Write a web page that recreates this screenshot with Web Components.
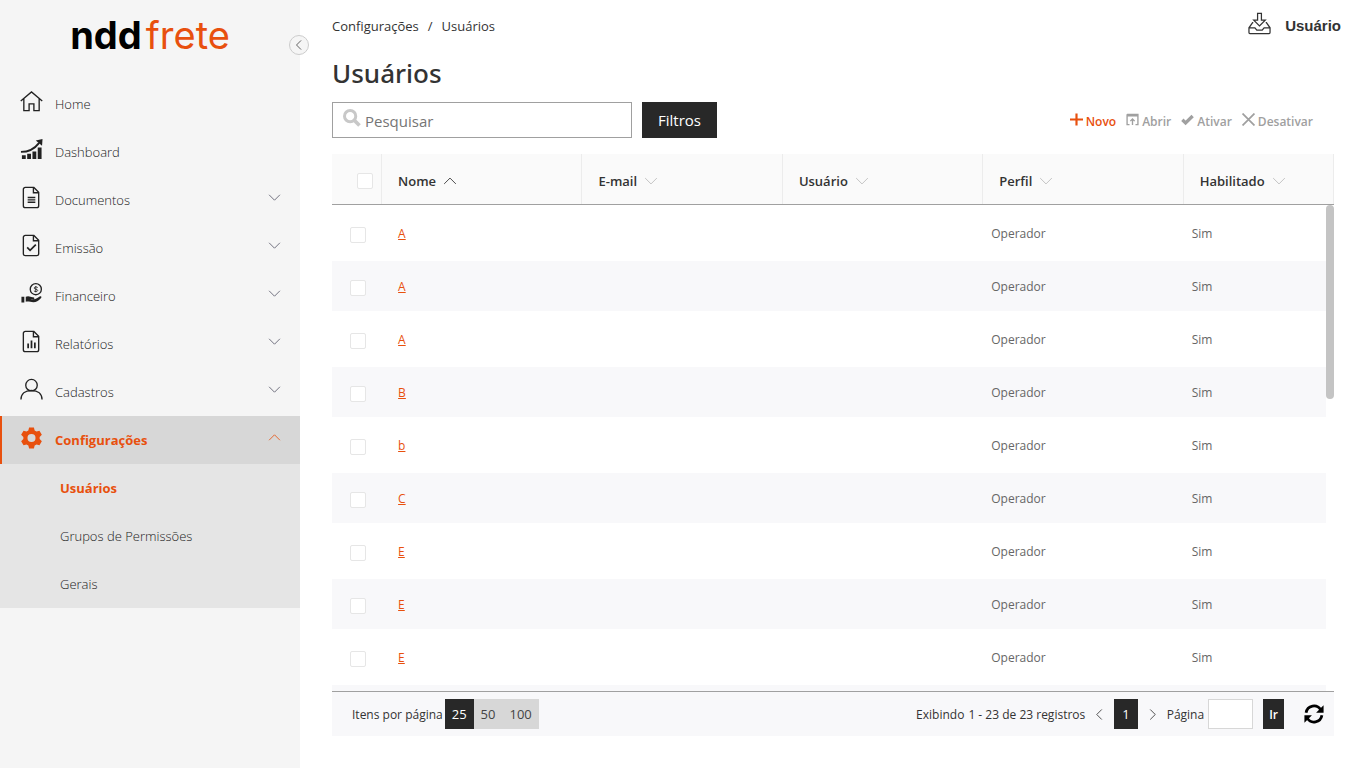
<!DOCTYPE html>
<html lang="pt-BR">
<head>
<meta charset="utf-8">
<meta name="viewport" content="width=device-width, initial-scale=1">
<title>nddfrete - Usuários</title>
<style>
    body {
        margin: 0;
        font-family: "Open Sans", "Noto Sans", sans-serif;
        font-size: 13px;
        color: #333;
        background: #fff;
        --orange: #e8500e;
        --dark: #282828;
    }
</style>
</head>
<body>
<ndd-app>
    <ndd-sidebar slot="sidebar">
        <ndd-nav-item icon="home" label="Home"></ndd-nav-item>
        <ndd-nav-item icon="dashboard" label="Dashboard"></ndd-nav-item>
        <ndd-nav-item icon="doc" label="Documentos" group></ndd-nav-item>
        <ndd-nav-item icon="docCheck" label="Emissão" group></ndd-nav-item>
        <ndd-nav-item icon="money" label="Financeiro" group></ndd-nav-item>
        <ndd-nav-item icon="docChart" label="Relatórios" group></ndd-nav-item>
        <ndd-nav-item icon="user" label="Cadastros" group></ndd-nav-item>
        <ndd-nav-item icon="gear" label="Configurações" group opened>
            <ndd-nav-link active>Usuários</ndd-nav-link>
            <ndd-nav-link>Grupos de Permissões</ndd-nav-link>
            <ndd-nav-link>Gerais</ndd-nav-link>
        </ndd-nav-item>
    </ndd-sidebar>
    <ndd-topbar section="Configurações" page="Usuários" user="Usuário"></ndd-topbar>
    <ndd-toolbar heading="Usuários">
        <ndd-action icon="plus" primary>Novo</ndd-action>
        <ndd-action icon="open">Abrir</ndd-action>
        <ndd-action icon="check">Ativar</ndd-action>
        <ndd-action icon="cross">Desativar</ndd-action>
    </ndd-toolbar>
    <ndd-grid></ndd-grid>
    <ndd-pager></ndd-pager>
</ndd-app>

<script>
const page = '<path d="M5.5 1.5h9l5 5v14a2 2 0 0 1-2 2h-12a2 2 0 0 1-2-2v-17a2 2 0 0 1 2-2z"/><path d="M14 2v5h5"/>';

const icons = {
    home: '<path d="M.8 11.5 12 2l11.200 9.500M4 9v12.500h5.500v-7h5v7H20V9"/>',
    dashboard: '<path d="M1 14.500c8 0 14-3 19-9.500" stroke-width="2"/><path d="M16.500 2.500 23.500 1l-.5 7z" fill="currentColor" stroke="none"/><path d="M2 18h4v4H2zM7.500 16.500h4V22h-4zM13 14h4v8h-4zM18.500 10h4v12h-4z" fill="currentColor" stroke="none"/>',
    doc: page + '<path d="M8 12h8M8 14.500h8M8 17h8"/>',
    docCheck: page + '<path d="m7.500 14 3 3 6-6" stroke-width="1.800"/>',
    docChart: page + '<path d="M8.500 19v-5M12 19v-8M15.500 19v-6" stroke-width="1.800"/>',
    money: '<circle cx="16.500" cy="7.500" r="5.800"/><path d="M18.500 5.800c-1-1-3.800-.7-3.800.5 0 1.500 3.800.9 3.800 2.500 0 1.300-2.800 1.500-4 .5M16.500 4.200v6.600" stroke-width=".9"/><path d="M1.500 15.500h3v6H1.500zM6 15.500c3-1.500 5 .3 7 .3 2.500 0 2.500 1.700 1 2.200h-3c3 1 6-.5 9.500-2.800 1.500-.7 2.500.3 1.500 1.500-3 3.300-5 4.300-8 4.300-3 0-5-1-8-.5z" fill="currentColor" stroke="none"/>',
    user: '<circle cx="12" cy="7.500" r="6"/><path d="M1 22.500c0-6 4.500-9.500 11-9.500s11 3.500 11 9.500"/>',
    gear: '<path fill="currentColor" stroke="none" fill-rule="evenodd" d="M9.500 1.500h5l.8 3.200 1.900 1.100 3.100-.9 2.500 4.300-2.300 2.300v2l2.300 2.300-2.500 4.300-3.100-.9-1.900 1.100-.8 3.200h-5l-.8-3.200-1.900-1.100-3.100.9-2.500-4.300 2.300-2.300v-2L1.200 9.200l2.500-4.300 3.100.9 1.900-1.100zM12 8.300a4.200 4.200 0 1 0 0 8.400 4.200 4.200 0 0 0 0-8.400z"/>',
    down: '<path d="m2 7 10 10L22 7"/>',
    up: '<path d="M2 17 12 7l10 10"/>',
    left: '<path d="M17 1 6 12l11 11"/>',
    right: '<path d="m7 1 11 11L7 23"/>',
    inbox: '<path d="M10 1.500h4v7h4l-6 6-6-6h4zM5.500 11H4.800L1 16.500v5a1 1 0 0 0 1 1h20a1 1 0 0 0 1-1v-5L19.200 11h-.7M1.200 16.500h6l2 2.500h5.600l2-2.500h6"/>',
    search: '<circle cx="9.500" cy="9.500" r="7.500" stroke-width="4"/><path d="m15 15 7 7" stroke-width="5"/>',
    plus: '<path d="M12 1v22M0 12h24" stroke-width="4"/>',
    open: '<path d="M2 2.500h20v19h-4.500M6.500 21.500H2V2.500" stroke-width="2.500"/><path d="M2 4.500h20" stroke-width="4"/><path d="M12 22V11m-4 4 4-4 4 4" stroke-width="2.500"/>',
    check: '<path d="m2.500 12.500 6 6L21.500 5.500" stroke-width="6"/>',
    cross: '<path d="m1 1 22 22M23 1 1 23" stroke-width="3.200"/>',
    refresh: '<path d="M2.500 10.500C4 1.500 15.500-.5 20 7M21.500 13.500C20 22.500 8.500 24.500 4 17" stroke-width="3.300"/><path d="M23.500 1.500v9h-9zM.5 22.500v-9h9z" fill="currentColor" stroke="none"/>'
};

class NddElement extends HTMLElement {
    constructor() {
        super();
        this.attachShadow({ mode: 'open' });
    }

    connectedCallback() {
        this.shadowRoot.innerHTML = this.render();
    }

    attr(name) {
        return this.getAttribute(name) || '';
    }
}

// <ndd-icon name="home" size="24" weight="1.5">
class NddIcon extends NddElement {
    render() {
        const size = this.attr('size') || 24;
        return `
        <style>
        :host { display: inline-flex; flex: none; }
        svg { display: block; }
        </style>
        <svg width="${size}" height="${size}" viewBox="0 0 24 24" fill="none" stroke="currentColor"
             stroke-width="${this.attr('weight') || 1.5}" aria-hidden="true">${icons[this.attr('name')]}</svg>
        `;
    }
}

class NddApp extends NddElement {
    render() {
        return `
        <style>
        :host {
            display: flex;
            height: 100vh;
        }
        main {
            flex: 1;
            min-width: 0;
            display: flex;
            flex-direction: column;
            padding: 0 32px 32px;
            box-sizing: border-box;
        }
        </style>
        <slot name="sidebar"></slot>
        <main><slot></slot></main>
        `;
    }
}

class NddSidebar extends NddElement {
    render() {
        return `
        <style>
        :host {
            position: relative;
            flex: none;
            width: 300px;
            background: #f5f5f5;
        }
        .logo {
            display: flex;
            justify-content: center;
            gap: 4px;
            height: 80px;
            line-height: 70px;
            font-family: Inter, sans-serif;
            font-size: 38px;
            color: var(--orange);
            text-decoration: none;
        }
        .logo b { color: #000; }
        .collapse {
            position: absolute;
            top: 35px;
            right: -9px;
            width: 20px;
            height: 20px;
            padding: 0;
            display: flex;
            align-items: center;
            justify-content: center;
            border: 1px solid #ccc;
            border-radius: 50%;
            background: #f5f5f5;
            color: #444;
        }
        </style>
        <a class="logo" href="#"><b>ndd</b><span>frete</span></a>
        <button class="collapse" aria-label="Recolher menu"><ndd-icon name="left" size="10" weight="2"></ndd-icon></button>
        <nav><slot></slot></nav>
        `;
    }
}

class NddNavItem extends NddElement {
    render() {
        const group = this.hasAttribute('group');
        const opened = this.hasAttribute('opened');
        const tag = group ? 'button' : 'a href="#"';
        return `
        <style>
        :host { display: block; }
        .item {
            display: flex;
            align-items: center;
            width: 100%;
            height: 48px;
            box-sizing: border-box;
            padding: 0 19px 0 20px;
            border: 0;
            background: none;
            font: inherit;
            font-weight: 300;
            color: #222;
            text-align: left;
            text-decoration: none;
            cursor: pointer;
        }
        .item ndd-icon { padding-bottom: 5px; }
        .label { flex: 1; padding-left: 12px; }
        .chevron { color: #556; }
        :host([opened]) .item {
            padding-left: 18px;
            border-left: 2px solid var(--orange);
            background: #d7d7d7;
            color: var(--orange);
            font-weight: 700;
        }
        :host([opened]) .chevron { color: inherit; }
        .children { background: #e5e5e5; }
        </style>
        <${tag} class="item">
            <ndd-icon name="${this.attr('icon')}" size="23" weight="1.4"></ndd-icon>
            <span class="label">${this.attr('label')}</span>
            ${group ? `<ndd-icon class="chevron" name="${opened ? 'up' : 'down'}" size="13"></ndd-icon>` : ''}
        </${group ? 'button' : 'a'}>
        <div class="children"><slot></slot></div>
        `;
    }

    connectedCallback() {
        super.connectedCallback();
        if (this.hasAttribute('group')) {
            this.shadowRoot.querySelector('button').setAttribute('aria-expanded', this.hasAttribute('opened'));
        }
    }
}

class NddNavLink extends NddElement {
    render() {
        return `
        <style>
        :host { display: block; }
        a {
            display: block;
            padding-left: 60px;
            line-height: 48px;
            font-weight: 300;
            color: #222;
            text-decoration: none;
        }
        :host([active]) a {
            font-weight: 700;
            color: var(--orange);
        }
        </style>
        <a href="#"><slot></slot></a>
        `;
    }
}

class NddTopbar extends NddElement {
    render() {
        return `
        <style>
        :host {
            display: flex;
            align-items: center;
            justify-content: space-between;
            height: 52px;
            margin-right: -7px;
        }
        nav { display: flex; gap: 9px; }
        a { color: inherit; text-decoration: none; }
        .user { display: flex; align-items: center; gap: 14px; }
        .user ndd-icon { padding-bottom: 6px; }
        strong {
            font-family: "Liberation Sans", Arial, sans-serif;
            font-size: 15px;
            line-height: 16px;
        }
        </style>
        <nav aria-label="Navegação">
            <a href="#">${this.attr('section')}</a><span>/</span><a href="#">${this.attr('page')}</a>
        </nav>
        <div class="user">
            <ndd-icon name="inbox" size="23" weight="1.3"></ndd-icon>
            <strong>${this.attr('user')}</strong>
        </div>
        `;
    }
}

class NddToolbar extends NddElement {
    render() {
        return `
        <style>
        :host { display: block; }
        h1 {
            margin: 0;
            font-family: "Noto Sans", "Open Sans", sans-serif;
            font-size: 26px;
            line-height: 42px;
            font-weight: 500;
        }
        .row {
            display: flex;
            align-items: center;
            gap: 10px;
            padding: 8px 21px 16px 0;
        }
        .search {
            display: flex;
            align-items: center;
            gap: 4px;
            width: 300px;
            height: 36px;
            box-sizing: border-box;
            padding: 0 10px;
            border: 1px solid #a0a0a0;
            color: #c8c8c8;
        }
        .search ndd-icon { padding-bottom: 5px; }
        input {
            flex: 1;
            min-width: 0;
            padding: 2px 0 0;
            border: 0;
            outline: 0;
            background: none;
            font: inherit;
            font-size: 15px;
            color: #333;
        }
        input::placeholder { color: #757575; }
        .filter {
            height: 36px;
            padding: 0 16px;
            border: 0;
            background: var(--dark);
            color: #fff;
            font: inherit;
            font-size: 15px;
        }
        .actions {
            display: flex;
            gap: 10px;
            margin-left: auto;
        }
        </style>
        <h1>${this.attr('heading')}</h1>
        <div class="row">
            <label class="search">
                <ndd-icon name="search" size="18"></ndd-icon>
                <input type="text" placeholder="Pesquisar" aria-label="Pesquisar">
            </label>
            <button class="filter">Filtros</button>
            <div class="actions"><slot></slot></div>
        </div>
        `;
    }
}

class NddAction extends NddElement {
    render() {
        return `
        <style>
        button {
            display: flex;
            align-items: center;
            gap: 3px;
            padding: 2px 0 0;
            border: 0;
            background: none;
            font: inherit;
            font-size: 12px;
            font-weight: 600;
            color: #a0a0a0;
        }
        ndd-icon { padding-bottom: 4px; }
        :host([primary]) button { color: var(--orange); }
        </style>
        <button><ndd-icon name="${this.attr('icon')}" size="13"></ndd-icon><slot></slot></button>
        `;
    }
}

class NddGrid extends NddElement {
    constructor() {
        super();
        this.columns = ['Nome', 'E-mail', 'Usuário', 'Perfil', 'Habilitado'];
        this.rows = ['A', 'A', 'A', 'B', 'b', 'C', 'E', 'E', 'E', ''];
    }

    header(name, index) {
        const sorted = index === 0;
        return `<th scope="col"${sorted ? ' class="sorted" aria-sort="ascending"' : ''}>
            <span>${name}<ndd-icon name="${sorted ? 'up' : 'down'}" size="14"></ndd-icon></span></th>`;
    }

    row(name) {
        // last row is cut off by the pager
        const filled = name !== '';
        return `<tr>
            <td class="tick">${filled ? '<input type="checkbox" aria-label="Selecionar registro">' : ''}</td>
            <td class="name">${filled ? `<a href="#">${name}</a>` : ''}</td>
            <td></td>
            <td></td>
            <td>${filled ? 'Operador' : ''}</td>
            <td>${filled ? 'Sim' : ''}</td>
        </tr>`;
    }

    render() {
        const cols = '<colgroup><col class="c5"><col class="c20"><col class="c20"><col class="c20"><col class="c20"><col class="c15"></colgroup>';
        return `
        <style>
        :host {
            flex: 1;
            min-height: 0;
            display: flex;
            flex-direction: column;
        }
        table {
            width: 100%;
            table-layout: fixed;
            border-collapse: separate;
            border-spacing: 0;
        }
        .c5 { width: 5%; }
        .c15 { width: 15%; }
        .c20 { width: 20%; }
        .head {
            border-bottom: 1px solid #a0a0a0;
            background: #fafafa;
        }
        th {
            height: 50px;
            padding: 4px 16px 0;
            box-sizing: border-box;
            border-right: 1px solid #ececec;
            text-align: left;
            font-weight: 600;
        }
        th.tick { padding: 2px 8px 0 0; text-align: right; }
        th span { display: flex; align-items: center; gap: 7px; }
        th ndd-icon { color: #bbb; }
        .sorted ndd-icon { color: #333; }
        input {
            appearance: none;
            display: inline-block;
            width: 16px;
            height: 16px;
            margin: 0;
            border: 1px solid #e6e6e6;
            border-radius: 2px;
            background: #fff;
            vertical-align: middle;
        }
        .body {
            position: relative;
            flex: 1;
            min-height: 0;
            overflow: hidden;
        }
        .body table {
            border-spacing: 0 3px;
            font-size: 12px;
            color: #666;
        }
        td {
            height: 50px;
            padding: 0 8px;
            box-sizing: border-box;
        }
        tr:nth-child(even) td { background: #f8f8fa; }
        td.tick { padding: 2px 0 0 18px; }
        td.name { padding-left: 16px; }
        td a { color: var(--orange); }
        .track {
            position: absolute;
            top: 0;
            right: 0;
            bottom: 0;
            width: 8px;
            background: #fff;
        }
        .thumb {
            height: 40%;
            border-radius: 4px;
            background: #c4c4c4;
        }
        </style>
        <div class="head">
            <table>${cols}
                <thead><tr>
                    <th class="tick"><input type="checkbox" aria-label="Selecionar todos"></th>
                    ${this.columns.map(this.header).join('')}
                </tr></thead>
            </table>
        </div>
        <div class="body">
            <table>${cols}<tbody>${this.rows.map(this.row).join('')}</tbody></table>
            <div class="track"><div class="thumb"></div></div>
        </div>
        `;
    }
}

class NddPager extends NddElement {
    render() {
        return `
        <style>
        :host {
            display: flex;
            align-items: center;
            justify-content: space-between;
            height: 44px;
            padding: 0 10px 0 20px;
            border-top: 1px solid #a0a0a0;
            background: #f8f8fa;
            font-size: 12px;
        }
        div { display: flex; align-items: center; }
        .sizes { gap: 2px; }
        button {
            display: flex;
            align-items: center;
            height: 30px;
            padding: 0 7px;
            border: 0;
            background: #d7d7d7;
            color: #444;
            font: inherit;
            font-size: 13px;
        }
        .on { background: var(--dark); color: #fff; }
        .plain { padding: 0; background: none; }
        .nav { gap: 9px; }
        .total { gap: 4px; }
        .go { gap: 4px; }
        .current { padding: 0 8px; }
        .go button { margin-left: 6px; padding: 0 6px; font-size: 12px; font-weight: 600; }
        .refresh { margin-left: 11px; color: #000; }
        input {
            width: 45px;
            height: 30px;
            box-sizing: border-box;
            border: 1px solid #d7d7d7;
            background: #fff;
            font: inherit;
        }
        </style>
        <div class="sizes">
            <span>Itens por página</span>
            <div><button class="on">25</button><button>50</button><button>100</button></div>
        </div>
        <div class="nav">
            <div class="total"><span>Exibindo</span><span>1 - 23 de 23 registros</span></div>
            <button class="plain" aria-label="Página anterior"><ndd-icon name="left" size="11" weight="2"></ndd-icon></button>
            <button class="on current">1</button>
            <button class="plain" aria-label="Próxima página"><ndd-icon name="right" size="11" weight="2"></ndd-icon></button>
            <div class="go">
                <label for="page">Página</label>
                <input id="page" type="text">
                <button class="on">Ir</button>
            </div>
            <button class="plain refresh" aria-label="Atualizar"><ndd-icon name="refresh" size="20"></ndd-icon></button>
        </div>
        `;
    }
}

customElements.define('ndd-icon', NddIcon);
customElements.define('ndd-app', NddApp);
customElements.define('ndd-sidebar', NddSidebar);
customElements.define('ndd-nav-item', NddNavItem);
customElements.define('ndd-nav-link', NddNavLink);
customElements.define('ndd-topbar', NddTopbar);
customElements.define('ndd-toolbar', NddToolbar);
customElements.define('ndd-action', NddAction);
customElements.define('ndd-grid', NddGrid);
customElements.define('ndd-pager', NddPager);
</script>
</body>
</html>
